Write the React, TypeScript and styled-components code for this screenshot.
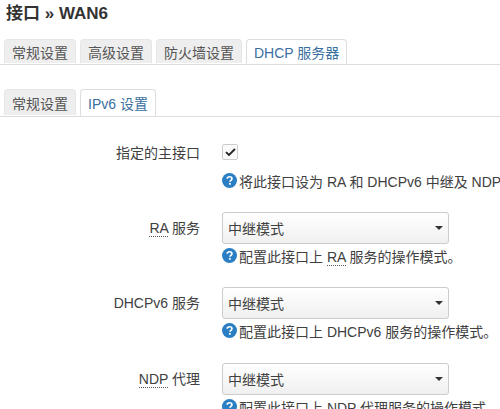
import * as React from 'react';
import styled, { createGlobalStyle } from 'styled-components';

const GlobalStyle = createGlobalStyle`
	html, body {
		margin: 0;
		padding: 0;
		width: 500px;
		height: 409px;
		overflow: hidden;
		background: #fff;
	}
	body {
		font-family: "Liberation Sans", "Noto Sans CJK SC", sans-serif;
		font-size: 14px;
		color: #404040;
	}
`;

const Page = styled.div`
	width: 500px;
	height: 409px;
	overflow: hidden;
	padding-left: 4px;
	box-sizing: border-box;
`;

const Title = styled.h2`
	margin: 0;
	padding: 3px 0 0 2px;
	height: 36px;
	box-sizing: border-box;
	font-size: 17px;
	line-height: 21px;
	font-weight: 700;
	color: #333;
	white-space: nowrap;
`;

const TabBar = styled.ul<{ $top?: number; $height: number }>`
	display: flex;
	gap: 4px;
	list-style: none;
	margin: ${p => p.$top ?? 0}px 0 0 -4px;
	padding: 0 0 0 4px;
	width: 500px;
	box-sizing: border-box;
	height: ${p => p.$height}px;
	border-bottom: 1px solid #ddd;
`;

const Tab = styled.li<{ $active?: boolean }>`
	height: ${p => (p.$active ? '100%' : 'calc(100% - 1px)')};
	box-sizing: border-box;
	padding: 0 7px;
	display: flex;
	align-items: center;
	white-space: nowrap;
	border: 1px solid ${p => (p.$active ? '#ddd' : '#e6e6e6')};
	border-bottom: ${p => (p.$active ? '1px solid #fff' : '0')};
	border-radius: 4px 4px 0 0;
	background: ${p => (p.$active ? '#fff' : '#eee')};
	color: ${p => (p.$active ? '#3a6f9f' : '#555')};
`;

const Form = styled.div`
	margin-top: 27px;
	display: flex;
	flex-direction: column;
`;

const Row = styled.div<{ $height: number }>`
	display: grid;
	grid-template-columns: 196px 1fr;
	column-gap: 22px;
	height: ${p => p.$height}px;
`;

const Label = styled.div<{ $lineHeight: number }>`
	text-align: right;
	line-height: ${p => p.$lineHeight}px;
	color: #404040;
	white-space: nowrap;
`;

const Field = styled.div`
	display: flex;
	flex-direction: column;
	min-width: 0;
`;

const CheckBox = styled.div`
	width: 16px;
	height: 16px;
	box-sizing: border-box;
	border: 1px solid #ccc;
	border-radius: 2px;
	background: #fafafa;
	display: flex;
	align-items: center;
	justify-content: center;
	margin-bottom: 9px;
`;

const Select = styled.div`
	width: 227px;
	height: 32px;
	box-sizing: border-box;
	border: 1px solid #ccc;
	border-radius: 3px;
	background: linear-gradient(#fff, #f0f0f0);
	padding: 0 5px 0 5px;
	display: flex;
	align-items: center;
	justify-content: space-between;
	color: #404040;
`;

const Caret = styled.span`
	width: 0;
	height: 0;
	border-left: 4px solid transparent;
	border-right: 4px solid transparent;
	border-top: 4px solid #333;
`;

const Help = styled.div`
	display: flex;
	align-items: flex-start;
	gap: 2px;
	margin-top: 3px;
	line-height: 20px;
	color: #404040;
	white-space: nowrap;
`;

const HelpBadge = styled.svg`
	flex: none;
	width: 15px;
	height: 15px;
	margin-top: 1px;
`;

const Abbr = styled.span`
	border-bottom: 1px dotted #555;
`;

const HelpIcon = () => (
	<HelpBadge viewBox="0 0 16 16">
		<circle cx="8" cy="8" r="8" fill="#2a7fc4" />
		<path
			d="M5.5 6.2C5.6 4.7 6.7 4 8.1 4c1.5 0 2.5.8 2.5 2 0 1-.6 1.5-1.3 2-.6.4-.8.7-.8 1.4"
			fill="none"
			stroke="#fff"
			strokeWidth="1.8"
		/>
		<rect x="7.4" y="10.6" width="1.9" height="1.9" fill="#fff" />
	</HelpBadge>
);

const modeRows = [
	{ height: 75, label: <><Abbr>RA</Abbr> 服务</>, help: <>配置此接口上 <Abbr>RA</Abbr> 服务的操作模式。</> },
	{ height: 76, label: <>DHCPv6 服务</>, help: <>配置此接口上 DHCPv6 服务的操作模式。</> },
	{ height: 76, label: <><Abbr>NDP</Abbr> 代理</>, help: <>配置此接口上 <Abbr>NDP</Abbr> 代理服务的操作模式。</> }
];

const App = () => (
	<Page>
		<GlobalStyle />
		<Title>接口 » WAN6</Title>
		<TabBar $top={3} $height={26}>
			<Tab>常规设置</Tab>
			<Tab>高级设置</Tab>
			<Tab>防火墙设置</Tab>
			<Tab $active>DHCP 服务器</Tab>
		</TabBar>
		<TabBar $top={24} $height={28}>
			<Tab>常规设置</Tab>
			<Tab $active>IPv6 设置</Tab>
		</TabBar>
		<Form>
			<Row $height={68}>
				<Label $lineHeight={18}>指定的主接口</Label>
				<Field>
					<CheckBox>
						<svg width="13" height="12" viewBox="0 0 13 12">
							<path d="M2 6.2 5 9 11 3" fill="none" stroke="#222" strokeWidth="1.8" />
						</svg>
					</CheckBox>
					<Help>
						<HelpIcon />
						将此接口设为 RA 和 DHCPv6 中继及 NDP 代理的主接口。
					</Help>
				</Field>
			</Row>
			{modeRows.map((row, i) => (
				<Row $height={row.height} key={i}>
					<Label $lineHeight={32}>{row.label}</Label>
					<Field>
						<Select>
							中继模式
							<Caret />
						</Select>
						<Help>
							<HelpIcon />
							<span>{row.help}</span>
						</Help>
					</Field>
				</Row>
			))}
		</Form>
	</Page>
);

export default App;
